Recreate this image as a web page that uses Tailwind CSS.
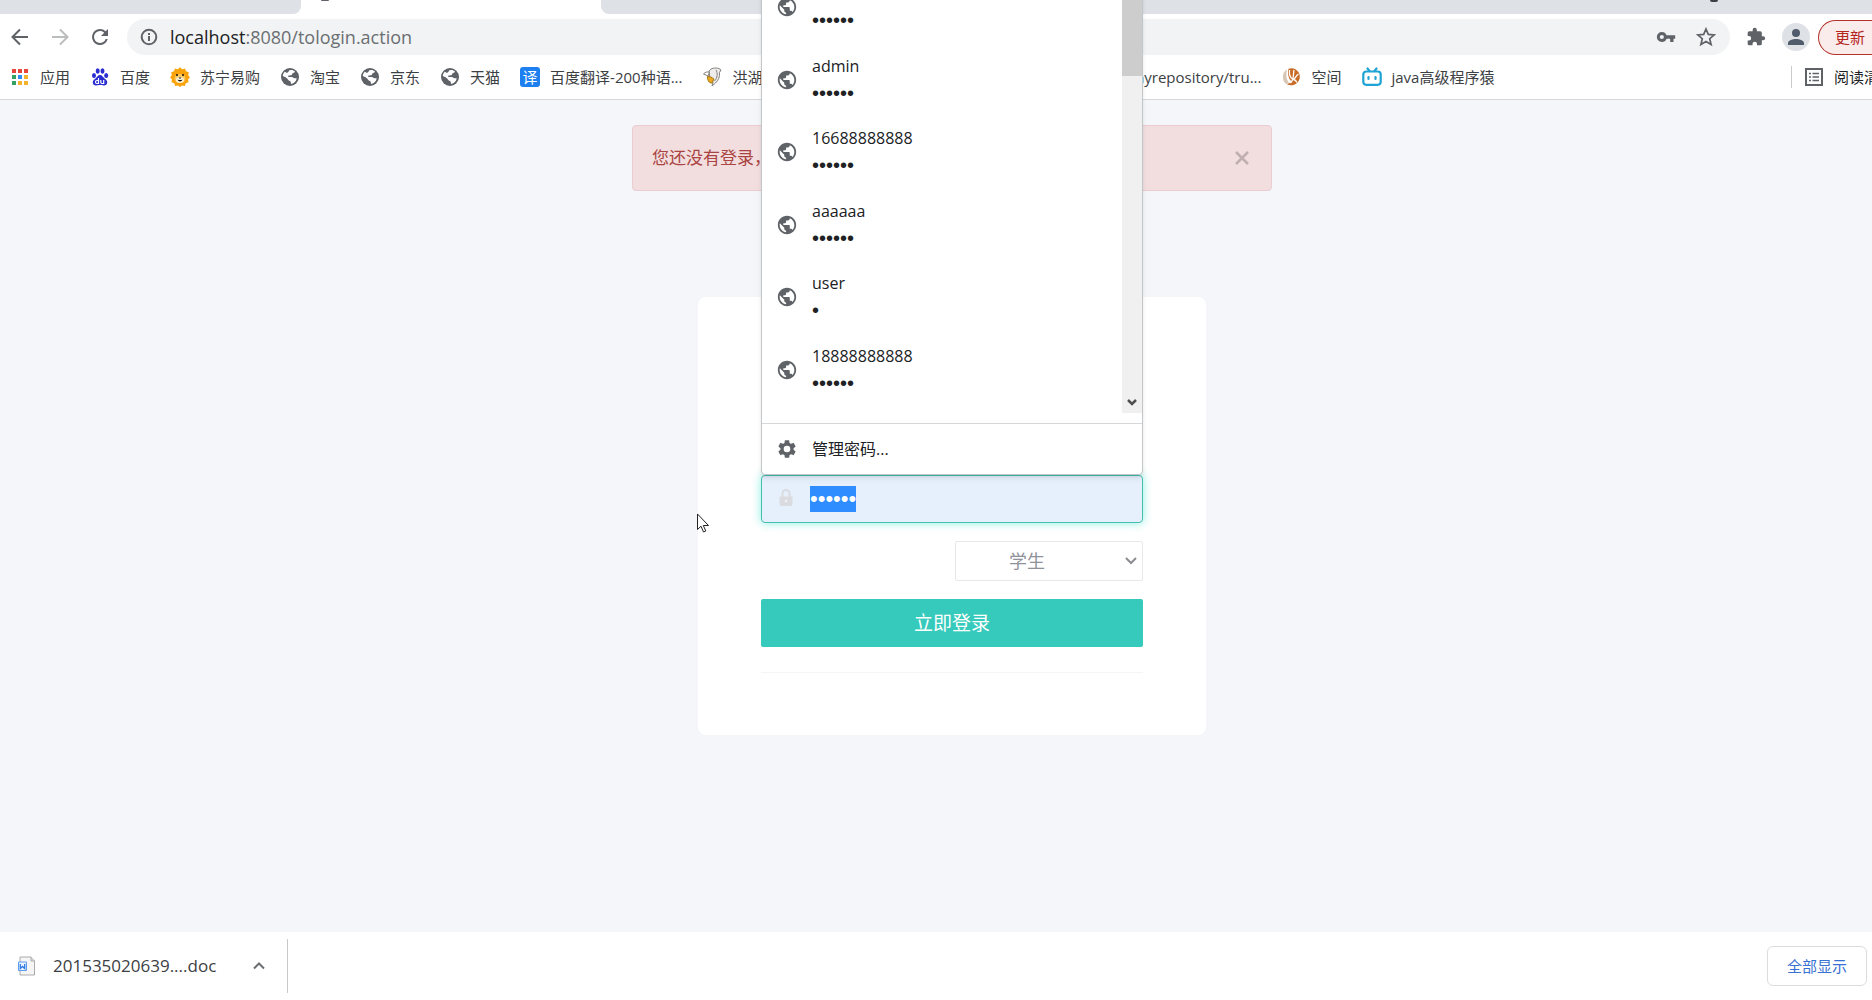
<!DOCTYPE html>
<html lang="zh-CN">
<head>
  <meta charset="UTF-8" />
  <meta name="viewport" content="width=device-width, initial-scale=1.0"/>
  <title>登录</title>
  <script src="https://cdn.jsdelivr.net/npm/@tailwindcss/browser@4"></script>
</head>
<body class="bg-[#f4f6fa] font-['Open_Sans','Noto_Sans_CJK_SC',sans-serif] text-[#3c4043]">
  <svg class="hidden" aria-hidden="true">
    <symbol id="earth" viewBox="0 0 24 24">
      <path d="M12 2C6.48 2 2 6.48 2 12s4.48 10 10 10 10-4.48 10-10S17.52 2 12 2zm-1 17.93c-3.95-.49-7-3.85-7-7.93 0-.62.08-1.21.21-1.79L9 15v1c0 1.1.9 2 2 2v1.93zm6.9-2.54c-.26-.81-1-1.39-1.9-1.39h-1v-3c0-.55-.45-1-1-1H8v-2h2c.55 0 1-.45 1-1V7h2c1.1 0 2-.9 2-2v-.41c2.93 1.19 5 4.06 5 7.41 0 2.08-.8 3.97-2.1 5.39z"/>
    </symbol>
    <symbol id="globe" viewBox="0 0 20 20">
      <circle cx="10" cy="10" r="9" fill="#5f6368"/>
      <path d="M9.500 3.200c2-.6 4.300 0 5.600 1.600-.6 1-1.800 1-2.600 1.600-.8.600-.4 1.600-1.400 1.900-1.300.4-2.300-.2-2.900.500-.4.600.3 1.300 1.300 1.300h2.300c1.200 0 1.500 1.200 2.700 1.200h2.200c-.2 2.500-2.200 5-5.200 5.600-1-.1-.3-1.500-1-2.400-.6-.8-2-.6-2.500-1.700-.5-1.200-1.800-2-3-2.700-.9-.5-1.600-1-2.200-1.100.1-1.500.8-3 1.900-4.200.9.200 1.300 1.100 2.300 1 1.200-.1 1.700-1.700 2.500-2.600z" fill="#fff"/>
    </symbol>
  </svg>

  <div class="flex h-screen flex-col overflow-hidden">
    <header class="bg-white">
      <div class="flex h-[14px]">
        <div class="w-[301px] rounded-br-lg bg-[#dee1e6]"></div>
        <div class="flex w-[300px] items-start pl-5"><span class="h-px w-2 rounded-b-full bg-[#5f6368]"></span></div>
        <div class="flex flex-1 items-start justify-end rounded-bl-lg bg-[#dee1e6] pr-[154px]"><span class="h-[2px] w-2 rounded-b-full bg-[#3c4043]"></span></div>
      </div>

      <div class="flex items-center pt-[5px]">
        <button type="button" aria-label="后退" class="flex w-10 justify-center">
          <svg class="size-5" viewBox="0 0 20 20" fill="none" stroke="#5f6368" stroke-width="2"><path d="M18 10H3M10 2.500 2.500 10l7.500 7.500"/></svg>
        </button>
        <button type="button" aria-label="前进" class="flex w-10 justify-center">
          <svg class="size-5" viewBox="0 0 20 20" fill="none" stroke="#babcbe" stroke-width="2"><path d="M2 10h15M10 2.500 17.500 10 10 17.500"/></svg>
        </button>
        <button type="button" aria-label="重新加载" class="flex w-10 justify-center">
          <svg class="size-6" viewBox="0 0 24 24" fill="#5f6368"><path d="M17.650 6.350A7.960 7.960 0 0 0 12 4a8 8 0 1 0 7.730 10h-2.080A6 6 0 1 1 12 6c1.660 0 3.140.69 4.220 1.780L13 11h7V4l-2.350 2.350z"/></svg>
        </button>
        <div class="ml-[7px] flex h-9 flex-1 items-center rounded-full bg-[#f1f3f4] pr-[14px] pl-[13px]">
          <svg class="size-[18px]" viewBox="0 0 18 18" fill="none" stroke="#5f6368" stroke-width="2"><circle cx="9" cy="9" r="7.300"/><path d="M9 8v5M9 5v2"/></svg>
          <a href="#" class="ml-3 text-[18px] text-[#6b6f73]"><span class="text-[#202124]">localhost</span>:8080/tologin.action</a>
          <button type="button" aria-label="密码" class="ml-auto">
            <svg class="size-5" viewBox="0 0 24 24" fill="#5f6368"><path d="M12.650 10A6 6 0 0 0 7 6a6 6 0 0 0 0 12 6 6 0 0 0 5.650-4H17v4h4v-4h2v-4H12.650zM7 14.500a2.500 2.500 0 1 1 0-5 2.500 2.500 0 0 1 0 5z"/></svg>
          </button>
          <button type="button" aria-label="收藏" class="ml-5">
            <svg class="size-5" viewBox="0 0 20 20" fill="none" stroke="#5f6368" stroke-width="1.700"><path d="m10 2 2.300 5.400 5.900.5-4.500 3.800 1.400 5.800-5.100-3.100-5.100 3.100 1.400-5.800L1.800 7.900l5.900-.5z"/></svg>
          </button>
        </div>
        <button type="button" aria-label="扩展程序" class="ml-4">
          <svg class="size-5" viewBox="0 0 24 24" fill="#5f6368"><path d="M20.500 11H19V7a2 2 0 0 0-2-2h-4V3.500a2.500 2.500 0 0 0-5 0V5H4a2 2 0 0 0-2 2v3.800h1.500a2.700 2.700 0 0 1 0 5.400H2V20a2 2 0 0 0 2 2h3.800v-1.500a2.700 2.700 0 0 1 5.400 0V22H17a2 2 0 0 0 2-2v-4h1.500a2.500 2.500 0 0 0 0-5z"/></svg>
        </button>
        <button type="button" aria-label="用户" class="ml-4 flex size-7 items-center justify-center rounded-full bg-[#dee1e6]">
          <svg class="size-6" viewBox="0 0 24 24" fill="#505b6b"><path d="M12 12a4 4 0 1 0 0-8 4 4 0 0 0 0 8zm0 2c-2.670 0-8 1.340-8 4v2h16v-2c0-2.660-5.330-4-8-4z"/></svg>
        </button>
        <button type="button" class="ml-2 h-[35px] w-[54px] rounded-l-full border border-r-0 border-[#b3322c] bg-[#fbecec] pl-4 text-left text-[15px] whitespace-nowrap text-[#b3261e]">更新</button>
      </div>

      <nav class="flex h-[45px] items-center gap-5 overflow-hidden border-b border-[#d5d8dc] pl-[10px] text-[15px] whitespace-nowrap">
        <a href="#" class="flex items-center gap-[10px]">
          <svg class="size-5" viewBox="0 0 20 20">
            <path d="M2 2h4v4H2zM8 2h4v4H8zM14 2h4v4h-4z" fill="#e5473c"/>
            <path d="M2 8h4v4H2zM2 14h4v4H2z" fill="#34a162"/>
            <path d="M8 8h4v4H8z" fill="#2f8df5"/>
            <path d="M14 8h4v4h-4zM8 14h4v4H8zM14 14h4v4h-4z" fill="#f4b32c"/>
          </svg>应用</a>
        <a href="#" class="flex items-center gap-[10px]">
          <svg class="size-5" viewBox="0 0 20 20" fill="#2a2ed0">
            <ellipse cx="4" cy="8.500" rx="2" ry="2.600"/><ellipse cx="7.700" cy="4" rx="2" ry="2.700"/><ellipse cx="12.500" cy="4" rx="2" ry="2.700"/><ellipse cx="16.200" cy="8.500" rx="2" ry="2.600"/>
            <path d="M10 8c-2.200 0-2.800 2-4.500 3.500C3.500 13 2.600 14 2.800 15.700c.2 1.900 1.700 2.900 3.500 2.700 1.500-.2 2.200-.5 3.700-.5s2.200.3 3.700.5c1.800.2 3.300-.8 3.500-2.700.2-1.700-.7-2.700-2.700-4.200C12.800 10 12.200 8 10 8z"/>
            <path d="M8.500 11v5.500H7a1.500 1.500 0 0 1 0-3h1.500M10.800 13v2.300c0 .8.4 1.200 1.200 1.200h1.700V13" fill="none" stroke="#fff" stroke-width="1.200"/>
          </svg>百度</a>
        <a href="#" class="flex items-center gap-[10px]">
          <svg class="size-5" viewBox="0 0 20 20">
            <path d="m10 .3 2.200 1.900 2.900-.6.900 2.700 2.800 1-.6 2.900L20 10.300l-2 2.100.5 2.900-2.700 1-1 2.700-2.800-.5-2 1.500-2-1.500-2.800.5-1-2.700-2.700-1 .5-2.900-2-2.100 1.800-2.100-.6-2.900 2.800-1 .9-2.700 2.900.6z" fill="#f8a30c"/>
            <ellipse cx="10" cy="11.500" rx="5.500" ry="4.500" fill="#fdc85c"/>
            <ellipse cx="10" cy="13" rx="4" ry="3" fill="#fff3d6"/>
            <path d="M8.500 10.500h3L10 12z" fill="#111"/><path d="M7.500 12.500c1 2.600 4 2.600 5 0-1.600.8-3.400.8-5 0z" fill="#111"/>
            <circle cx="7" cy="8" r="1" fill="#111"/><circle cx="13" cy="8" r="1" fill="#111"/>
          </svg>苏宁易购</a>
        <a href="#" class="flex items-center gap-[10px]"><svg class="size-5"><use href="#globe"/></svg>淘宝</a>
        <a href="#" class="flex items-center gap-[10px]"><svg class="size-5"><use href="#globe"/></svg>京东</a>
        <a href="#" class="flex items-center gap-[10px]"><svg class="size-5"><use href="#globe"/></svg>天猫</a>
        <a href="#" class="flex items-center gap-[10px]"><span class="flex size-5 items-center justify-center rounded-[3px] bg-[#1e80f0] text-[15px] leading-5 text-white">译</span>百度翻译-200种语...</a>
        <div class="flex w-[559px] shrink-0 items-center justify-between">
          <a href="#" class="flex items-center gap-[10px]">
            <svg class="size-5" viewBox="0 0 20 20" stroke="#85817f" stroke-width="1">
              <path d="M7 4c2-3 6-3.500 10-2.500l2 1.500-1.500 2.500c.5 4-1 8-4 10.500l-3.500 3 1-4-3-3z" fill="#eeecec"/>
              <path d="M14 3c2 3 1.500 8-1.500 11" fill="none"/>
              <path d="M1.500 7c2-2.500 4-2 6-2L6 9z" fill="#fff"/>
              <path d="M5.500 9.500c2-.5 4.500 1 6.500 2.500l-2 4c-3 0-4.500-2-4.500-6.500z" fill="#eaa91f" stroke="#a87418"/>
            </svg>洪湖</a>
          <a href="#">myrepository/tru...</a>
        </div>
        <a href="#" class="flex items-center gap-[10px]">
          <svg class="size-5" viewBox="0 0 20 20">
            <path d="M6 2.500C1 5 .5 13 5 17l3-1C5 12 5 7 6 2.500z" fill="#d8c6b4"/>
            <path d="M7.500 1.800c4-1.600 8.500.4 10.500 4.200 1.600 3.500.8 7.500-2 10-2.500 2.300-6.500 3-10 1.500 2-1.500 3.500-1.500 4.500-3C7.500 12 6.300 6 7.500 1.800z" fill="#c96c28"/>
            <path d="M8.500 3c-.5 4 1 8 3.500 9.500M13 3c-1 4 .5 9-3.500 13M17.500 7c-2 1-3 4-5 5.500 2 0 3 2 3.500 3" fill="none" stroke="#fff" stroke-width="1.300"/>
          </svg>空间</a>
        <a href="#" class="flex items-center gap-[10px]">
          <svg class="size-5" viewBox="0 0 20 20" fill="none" stroke="#1fa3d4" stroke-width="2.200" stroke-linecap="round"><rect x="1.300" y="4.500" width="17.400" height="13.300" rx="3"/><path d="m5.500 1.500 2 2.500M14.500 1.500l-2 2.500M6.500 10v2M13.500 10v2"/></svg>java高级程序猿</a>
        <a href="#" class="ml-auto flex items-center gap-[10px] border-l border-[#c9cbce] pl-3 text-[#202124]">
          <svg class="size-5" viewBox="0 0 20 20" fill="none" stroke="#5f6368" stroke-width="2"><rect x="2" y="2" width="16" height="16"/><path d="M5 6.500h2M8.500 6.500H15M5 10h2M8.500 10H15M5 13.500h2M8.500 13.500H15" stroke-width="1.700"/></svg>
          <span class="w-[38px] overflow-hidden">阅读清单</span>
        </a>
      </nav>
    </header>

    <main class="flex flex-1 flex-col items-center pt-[25px] pl-8">
      <div role="alert" class="flex h-[66px] w-full max-w-[640px] items-center justify-between rounded-sm border border-[#ebccd1] bg-[#f2dede] pr-[19px] pl-[19px] text-[17px] text-[#a94442]">
        <span>您还没有登录，请先登录</span>
        <button type="button" aria-label="关闭">
          <svg class="size-5" viewBox="0 0 20 20" fill="none" stroke="#c0afb0" stroke-width="2.500"><path d="m4 4 12 12M16 4 4 16"/></svg>
        </button>
      </div>

      <form class="mt-[106px] flex w-full max-w-[508px] flex-col gap-[18px] rounded-lg bg-white px-[63px] pt-[178px] pb-[62px]">
        <div class="relative">
          <!-- saved passwords -->
          <div class="absolute bottom-full left-0 z-10 w-full overflow-hidden rounded-b-sm border border-[#c4c7ca] bg-white text-[16px] leading-[27px] text-[#202124] shadow-md">
            <div class="flex pb-[10px]">
              <ul class="grid h-[442px] flex-1 grid-rows-6 pb-[7px]">
                <li class="flex items-center gap-[14px] pl-[14px]"><svg class="size-[22px] fill-[#5f6368]"><use href="#earth"/></svg><div>aaa<div class="font-['Liberation_Sans'] text-[20px]">••••••</div></div></li>
                <li class="flex items-center gap-[14px] pl-[14px]"><svg class="size-[22px] fill-[#5f6368]"><use href="#earth"/></svg><div>admin<div class="font-['Liberation_Sans'] text-[20px]">••••••</div></div></li>
                <li class="flex items-center gap-[14px] pl-[14px]"><svg class="size-[22px] fill-[#5f6368]"><use href="#earth"/></svg><div>16688888888<div class="font-['Liberation_Sans'] text-[20px]">••••••</div></div></li>
                <li class="flex items-center gap-[14px] pl-[14px]"><svg class="size-[22px] fill-[#5f6368]"><use href="#earth"/></svg><div>aaaaaa<div class="font-['Liberation_Sans'] text-[20px]">••••••</div></div></li>
                <li class="flex items-center gap-[14px] pl-[14px]"><svg class="size-[22px] fill-[#5f6368]"><use href="#earth"/></svg><div>user<div class="font-['Liberation_Sans'] text-[20px]">•</div></div></li>
                <li class="flex items-center gap-[14px] pl-[14px]"><svg class="size-[22px] fill-[#5f6368]"><use href="#earth"/></svg><div>18888888888<div class="font-['Liberation_Sans'] text-[20px]">••••••</div></div></li>
              </ul>
              <div class="flex w-5 flex-col items-center justify-between bg-[#f0f0f0]">
                <div class="h-[105px] w-full bg-[#cdcdcd]"></div>
                <svg class="mb-1 size-3" viewBox="0 0 12 12" fill="none" stroke="#505050" stroke-width="2.500"><path d="m2 3 4 4 4-4"/></svg>
              </div>
            </div>
            <button type="button" class="flex h-[51px] w-full items-center gap-[14px] border-t border-[#d5d7da] pl-[14px]">
              <svg class="size-[22px] fill-[#5f6368]" viewBox="0 0 24 24"><path d="M19.140 12.940c.04-.3.060-.61.060-.94s-.02-.64-.07-.94l2.030-1.580a.5.5 0 0 0 .12-.61l-1.920-3.320a.49.49 0 0 0-.59-.22l-2.390.96a7 7 0 0 0-1.620-.94l-.36-2.540a.48.480 0 0 0-.48-.41h-3.840a.47.470 0 0 0-.47.41l-.36 2.540c-.59.240-1.130.57-1.620.94l-2.390-.96a.48.480 0 0 0-.59.220L2.740 8.870a.48.480 0 0 0 .12.610l2.030 1.580c-.05.3-.09.63-.09.940s.02.640.070.940l-2.030 1.580a.5.5 0 0 0-.12.610l1.920 3.320c.12.220.37.290.59.220l2.390-.96c.5.380 1.030.7 1.620.94l.36 2.540c.05.240.24.410.48.410h3.840c.24 0 .44-.17.470-.41l.36-2.540a7 7 0 0 0 1.620-.94l2.390.96c.22.080.47 0 .59-.22l1.920-3.320a.48.480 0 0 0-.12-.61zM12 15.600a3.600 3.600 0 1 1 0-7.200 3.600 3.600 0 0 1 0 7.200z"/></svg>
              管理密码...
            </button>
          </div>

          <svg class="absolute top-[14px] left-4 size-[18px]" viewBox="0 0 18 18" fill="#d9dbdf"><path d="M2.500 7.500h13v7.500a2 2 0 0 1-2 2h-9a2 2 0 0 1-2-2z"/><path d="M5.500 8V4.500a3.500 3.500 0 0 1 7 0V8" fill="none" stroke="#d9dbdf" stroke-width="2"/><circle cx="9" cy="12" r="1.300" fill="#eef2f8"/></svg>
          <input id="password" type="password" value="123456" aria-label="密码" class="block h-12 w-full rounded-sm border border-[#45bfb0] bg-[#e6f0fd] pl-12 font-['Liberation_Sans'] text-[22px] text-[#333] shadow-[0_0_10px_rgba(60,225,205,0.6)] outline-none selection:bg-[#2f8dff] selection:text-white">
        </div>

        <div class="relative w-[188px] self-end">
          <select aria-label="角色" class="block h-10 w-full appearance-none rounded-xs border border-[#e8e8ea] bg-white pl-[53px] text-[18px] text-[#909299]">
            <option>学生</option>
          </select>
          <svg class="pointer-events-none absolute top-[14px] right-[6px] size-3" viewBox="0 0 12 12" fill="none" stroke="#8a8c91" stroke-width="2"><path d="m1 3 5 5 5-5"/></svg>
        </div>

        <button type="submit" class="h-12 rounded-xs bg-[#35cabc] text-[19px] text-white">立即登录</button>
        <hr class="mt-[7px] border-[#f5f5f7]">
      </form>
    </main>

    <footer class="flex h-[68px] items-center bg-white pr-[5px]">
      <a href="#" class="flex items-center text-[17px]">
        <svg class="ml-[17px] size-5" viewBox="0 0 20 20"><path d="M3 1h11l3.500 3.500V19H3z" fill="#f5f5f5" stroke="#ababab"/><path d="M14 1v4h4" fill="#ddd" stroke="#ababab"/><path d="M1.500 6h8v8.500h-8z" fill="#eaf3ff" stroke="#5b9bf0"/><path d="M3.300 8v4.500l2.200-2 2.200 2V8" fill="none" stroke="#2c7ae0" stroke-width="1.300"/></svg>
        <span class="ml-4">201535020639....doc</span>
      </a>
      <button type="button" aria-label="更多" class="flex h-[54px] w-[72px] items-center border-r border-[#c6c8ca] pl-[37px]">
        <svg class="size-3" viewBox="0 0 12 12" fill="none" stroke="#6b6f73" stroke-width="2"><path d="m1 8.500 5-5 5 5"/></svg>
      </button>
      <button type="button" class="ml-auto h-10 w-[100px] rounded-md border border-[#dadce0] text-[15px] text-[#3871d1]">全部显示</button>
    </footer>
  </div>

  <svg class="absolute top-[513px] left-[697px] z-20 h-5 w-[13px]" viewBox="0 0 13 20" fill="#fff" stroke="#222" stroke-width="1"><path d="M.5 1v15.500l3.500-3.300 2.500 5.800 2.300-1-2.500-5.500h5.200z"/></svg>

  <script>
    const passwordInput = document.getElementById("password");
    passwordInput.focus({ preventScroll: true });
    passwordInput.select();
  </script>
</body>
</html>
